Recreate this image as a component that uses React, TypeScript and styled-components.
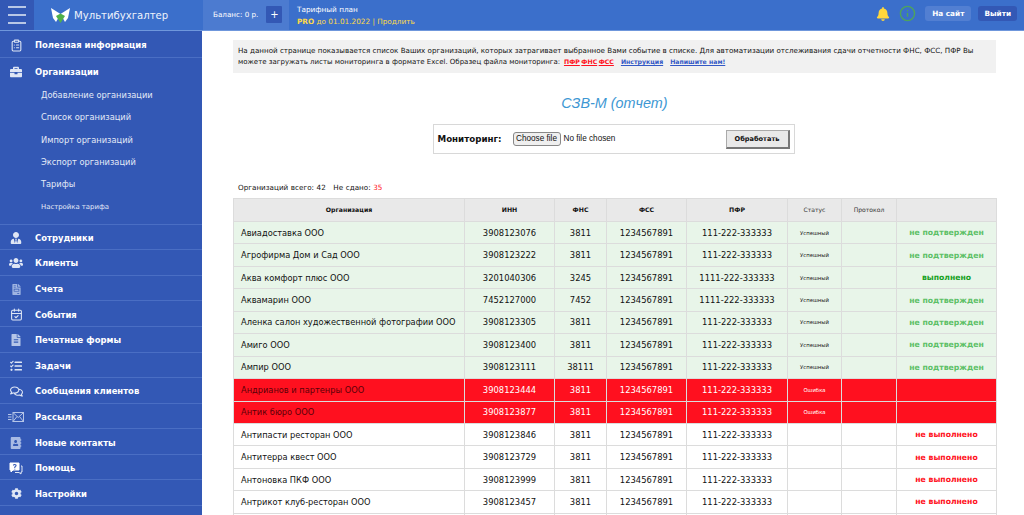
import React from "react";
import styled, { createGlobalStyle } from "styled-components";
import {
  FaAddressBook,
  FaBell,
  FaBriefcase,
  FaCog,
  FaFileAlt,
  FaRegComments,
  FaTasks,
  FaUserTie,
  FaUsers,
  FaFileInvoice,
} from "react-icons/fa";
import { CalendarCheck, ClipboardList, Info } from "lucide-react";

const GlobalStyle = createGlobalStyle`
  html, body {
    margin: 0;
    height: 100%;
    overflow: hidden;
    background: #fff;
    font-family: "DejaVu Sans", Verdana, sans-serif;
    color: #111;
  }
  * { box-sizing: border-box; }
`;

const Page = styled.div`
  width: 1024px;
  height: 515px;
  display: grid;
  grid-template-rows: 31px 1fr;
  overflow: hidden;
`;

const Header = styled.header`
  display: flex;
  align-items: stretch;
  background: #3b6fcb;
  border-bottom: 1px solid #6f97dc;
  color: #fff;
`;

const Burger = styled.div`
  width: 34px;
  background: #3358b5;
  display: flex;
  flex-direction: column;
  align-items: center;
  gap: 6px;
  padding-top: 6px;
  span {
    display: block;
    width: 18px;
    height: 2px;
    background: #b9c7e6;
  }
`;

const Brand = styled.div`
  width: 168px;
  display: flex;
  align-items: center;
  gap: 4px;
  padding-left: 17px;
  font-size: 10.1px;
  color: #eef3fb;
`;

const Balance = styled.div`
  width: 86px;
  margin-left: 1px;
  background: #4c7bd0;
  display: flex;
  align-items: center;
  gap: 8px;
  padding: 0 6px 2px 10px;
  font-size: 7.2px;
  white-space: nowrap;
`;

const PlusButton = styled.span`
  width: 16px;
  height: 17px;
  display: flex;
  align-items: center;
  justify-content: center;
  background: #3358b5;
  font-size: 10px;
  border-radius: 1px;
`;

const Plan = styled.div`
  margin-left: 8px;
  display: flex;
  flex-direction: column;
  gap: 3px;
  padding-top: 5px;
  font-size: 7.3px;
  white-space: nowrap;
`;

const PlanDate = styled.div`
  color: #fbd949;
  b { font-weight: 700; }
`;

const HeaderRight = styled.div`
  margin-left: auto;
  display: flex;
  align-items: center;
  padding: 0 7px 3px 0;
`;

const HeaderIcons = styled.div`
  display: flex;
  align-items: center;
  gap: 9px;
  margin-right: 9px;
`;

const HeaderButton = styled.span<{ $dark?: boolean }>`
  height: 15px;
  display: flex;
  align-items: center;
  padding: 0 ${({ $dark }) => ($dark ? "6px" : "7px")};
  margin-left: ${({ $dark }) => ($dark ? "7px" : "0")};
  border-radius: 3px;
  font-size: 7.3px;
  font-weight: 700;
  background: ${({ $dark }) => ($dark ? "#3358b5" : "#527fd2")};
`;

const Body = styled.div`
  display: grid;
  grid-template-columns: 202px 1fr;
  min-height: 0;
`;

const Sidebar = styled.nav`
  background: #3358b5;
  color: #fff;
  overflow: hidden;
  padding-top: 1px;
`;

const NavRow = styled.div`
  height: 25.6px;
  display: flex;
  align-items: center;
  padding-top: 2px;
  border-bottom: 1px solid #4a6ec4;
  font-size: 8.45px;
  font-weight: 700;
  white-space: nowrap;
`;

const NavIcon = styled.span`
  width: 35px;
  flex: none;
  display: flex;
  justify-content: center;
  padding-right: 3px;
  color: #dfe6f5;
`;

const NavGroup = styled.div`
  border-bottom: 1px solid #4a6ec4;
  padding-bottom: 5.5px;
`;

const GroupTitle = styled(NavRow)`
  height: 26.1px;
  border-bottom: 0;
`;

const SubItem = styled.div<{ $small?: boolean }>`
  height: 22.4px;
  display: flex;
  align-items: center;
  padding-left: 41px;
  color: #e4eaf7;
  font-size: ${({ $small }) => ($small ? "6.9px" : "8.28px")};
  white-space: nowrap;
`;

const Main = styled.main`
  padding: 9px 28px 0 31px;
  min-width: 0;
  overflow: hidden;
`;

const Notice = styled.div`
  height: 33px;
  padding: 5px 5px 0;
  background: #f1f1f1;
  font-size: 7.15px;
  line-height: 11px;
  white-space: nowrap;
`;

const NoticeLine = styled.span`
  font-size: 7px;
`;

const NoticeLink = styled.a<{ $red?: boolean }>`
  font-size: 6.2px;
  font-weight: 700;
  text-decoration: underline;
  color: ${({ $red }) => ($red ? "#ff1020" : "#3358c5")};
  margin-left: ${({ $red }) => ($red ? "1.5px" : "7px")};
`;

const Title = styled.h1`
  margin: 20px 0 0;
  height: 21px;
  text-align: center;
  font: italic 400 14.4px/21px "Liberation Sans", Arial, sans-serif;
  color: #3d97d3;
`;

const MonitorBox = styled.form`
  width: 362px;
  height: 30px;
  margin: 10px auto 0;
  display: flex;
  align-items: center;
  padding: 0 4px;
  border: 1px solid #d8d8d8;
  transform: translateX(-1px);
`;

const MonitorLabel = styled.label`
  width: 75px;
  font-size: 8.7px;
  font-weight: 700;
  white-space: nowrap;
`;

const FileField = styled.div`
  width: 213px;
  display: flex;
  align-items: center;
  gap: 3px;
  padding-bottom: 1px;
  font: 400 8.2px "Liberation Sans", Arial, sans-serif;
`;

const ChooseButton = styled.button`
  width: 48px;
  height: 14px;
  padding: 0;
  font: inherit;
  color: #111;
  background: #efefef;
  border: 1px solid #888;
  border-radius: 3px;
`;

const SubmitButton = styled.button`
  width: 64px;
  height: 19px;
  padding: 0;
  background: #e9e9e9;
  color: #111;
  border: 1px solid #aaa;
  border-right: 2px solid #777;
  border-bottom: 2px solid #777;
  font: 700 6.6px "DejaVu Sans", Verdana, sans-serif;
`;

const Summary = styled.div`
  margin-top: 28px;
  height: 11px;
  padding-left: 5px;
  font-size: 7.2px;
  line-height: 11px;
  word-spacing: 0.3px;
  span { color: #ff1020; }
  i { font-style: normal; margin-left: 5px; }
`;

const Table = styled.table`
  width: 763px;
  margin-top: 5px;
  table-layout: fixed;
  border-collapse: collapse;
`;

const Head = styled.th<{ $thin?: boolean }>`
  height: 23px;
  padding: 0 0 1px;
  background: #e9e9e9;
  border: 1px solid #dcdcdc;
  font-size: ${({ $thin }) => ($thin ? "6.05px" : "6.2px")};
  font-weight: ${({ $thin }) => ($thin ? 400 : 700)};
  color: ${({ $thin }) => ($thin ? "#333" : "#111")};
`;

type Tone = "ok" | "error" | "none";

const Row = styled.tr<{ $tone: Tone }>`
  height: 22.45px;
  background: ${({ $tone }) =>
    $tone === "ok" ? "#e8f5e9" : $tone === "error" ? "#ff101f" : "#fff"};
  color: ${({ $tone }) => ($tone === "error" ? "#fff" : "#111")};
`;

const Cell = styled.td`
  padding: 0;
  border: 1px solid #dcdcdc;
  text-align: center;
  font-size: 8.4px;
  white-space: nowrap;
  overflow: hidden;
`;

const NameCell = styled(Cell)<{ $tone: Tone }>`
  text-align: left;
  padding-left: 7px;
  font-size: 8.25px;
  color: ${({ $tone }) => ($tone === "error" ? "#5a0008" : "#111")};
`;

const StatusCell = styled(Cell)`
  font-size: 5.3px;
`;

const ResultCell = styled(Cell)<{ $color: string }>`
  font-size: 7.7px;
  font-weight: 700;
  color: ${({ $color }) => $color};
`;

const MailIcon = () => (
  <svg width="16" height="12" viewBox="0 0 16 12" fill="none" stroke="#b5c5e8">
    <rect x="5" y="1.5" width="10.5" height="9" />
    <path d="M5 1.5 L10.2 6.5 L15.5 1.5 M5 10.5 L9 5.5 M15.5 10.5 L11.5 5.5" />
    <path d="M0 3.5 H3.5 M0 6 H3.5 M0 8.5 H3.5" />
  </svg>
);

const HelpIcon = () => (
  <svg width="14" height="13" viewBox="0 0 14 13">
    <path d="M1 1 H10 V8 H4 L2 10 V8 H1 Z" fill="#fff" stroke="#fff" />
    <path
      d="M4.2 3.4 Q5.5 1.7 6.9 3 Q7.5 4 5.8 5 V6 M5.8 6.8 V7.6"
      fill="none"
      stroke="#3358b5"
      strokeWidth="1.1"
    />
    <path d="M12 4 H13 V10 H12 V12 L10 10.5 H6" fill="none" stroke="#dfe6f5" />
  </svg>
);

const navTop = [
  { label: "Сотрудники", icon: <FaUserTie size={12} /> },
  { label: "Клиенты", icon: <FaUsers size={14} /> },
  { label: "Счета", icon: <FaFileInvoice size={11} color="#9fb4e2" /> },
  { label: "События", icon: <CalendarCheck size={13} /> },
  { label: "Печатные формы", icon: <FaFileAlt size={12} color="#b5c5e8" /> },
  { label: "Задачи", icon: <FaTasks size={12} /> },
  { label: "Сообщения клиентов", icon: <FaRegComments size={13} /> },
  { label: "Рассылка", icon: <MailIcon /> },
  { label: "Новые контакты", icon: <FaAddressBook size={12} color="#a8bae4" /> },
  { label: "Помощь", icon: <HelpIcon /> },
  { label: "Настройки", icon: <FaCog size={11} /> },
];

const subItems = [
  "Добавление организации",
  "Список организаций",
  "Импорт организаций",
  "Экспорт организаций",
  "Тарифы",
];

const PENDING = "не подтвержден";
const DONE = "выполнено";
const MISSED = "не выполнено";

const rows: [string, string, string, string, string, Tone, string][] = [
  ["Авиадоставка ООО", "3908123076", "3811", "1234567891", "111-222-333333", "ok", PENDING],
  ["Агрофирма Дом и Сад ООО", "3908123222", "3811", "1234567891", "111-222-333333", "ok", PENDING],
  ["Аква комфорт плюс ООО", "3201040306", "3245", "1234567891", "1111-222-333333", "ok", DONE],
  ["Аквамарин ООО", "7452127000", "7452", "1234567891", "1111-222-333333", "ok", PENDING],
  ["Аленка салон художественной фотографии ООО", "3908123305", "3811", "1234567891", "111-222-333333", "ok", PENDING],
  ["Амиго ООО", "3908123400", "3811", "1234567891", "111-222-333333", "ok", PENDING],
  ["Ампир ООО", "3908123111", "38111", "1234567891", "111-222-333333", "ok", PENDING],
  ["Андрианов и партенры ООО", "3908123444", "3811", "1234567891", "111-222-333333", "error", ""],
  ["Антик бюро ООО", "3908123877", "3811", "1234567891", "111-222-333333", "error", ""],
  ["Антипасти ресторан ООО", "3908123846", "3811", "1234567891", "111-222-333333", "none", MISSED],
  ["Антитерра квест ООО", "3908123729", "3811", "1234567891", "111-222-333333", "none", MISSED],
  ["Антоновка ПКФ ООО", "3908123999", "3811", "1234567891", "111-222-333333", "none", MISSED],
  ["Антрикот клуб-ресторан ООО", "3908123457", "3811", "1234567891", "111-222-333333", "none", MISSED],
  ["", "", "", "", "", "none", ""],
];

const resultColor = (text: string) => {
  if (text === PENDING) return "#5cc066";
  if (text === DONE) return "#16a01e";
  return "#ff1020";
};

const statusText = (tone: Tone) => {
  if (tone === "ok") return "Успешный";
  if (tone === "error") return "Ошибка";
  return "";
};

const Logo = () => (
  <svg width="19" height="16" viewBox="0 0 19 16">
    <path d="M0 1 L9.5 7 L5 15 L2 11 Z" fill="#fff" />
    <path d="M19 1 L9.5 7 L14 15 L17 11 Z" fill="#fff" />
    <path d="M5 9 L9.5 6.5 L14 9 L9.5 16 Z" fill="#4fb04a" />
  </svg>
);

export default function App() {
  return (
    <Page>
      <GlobalStyle />
      <Header>
        <Burger>
          <span />
          <span />
          <span />
        </Burger>
        <Brand>
          <Logo />
          Мультибухгалтер
        </Brand>
        <Balance>
          Баланс: 0 р.
          <PlusButton>+</PlusButton>
        </Balance>
        <Plan>
          <div>Тарифный план</div>
          <PlanDate>
            <b>PRO</b> до 01.01.2022 | Продлить
          </PlanDate>
        </Plan>
        <HeaderRight>
          <HeaderIcons>
            <FaBell size={14} color="#ffd83c" />
            <Info size={17} color="#4ea45c" />
          </HeaderIcons>
          <HeaderButton>На сайт</HeaderButton>
          <HeaderButton $dark>Выйти</HeaderButton>
        </HeaderRight>
      </Header>
      <Body>
        <Sidebar>
          <NavRow>
            <NavIcon>
              <ClipboardList size={13} />
            </NavIcon>
            Полезная информация
          </NavRow>
          <NavGroup>
            <GroupTitle>
              <NavIcon>
                <FaBriefcase size={12} />
              </NavIcon>
              Организации
            </GroupTitle>
            {subItems.map((item) => (
              <SubItem key={item}>{item}</SubItem>
            ))}
            <SubItem $small>Настройка тарифа</SubItem>
          </NavGroup>
          {navTop.map((item) => (
            <NavRow key={item.label}>
              <NavIcon>{item.icon}</NavIcon>
              {item.label}
            </NavRow>
          ))}
        </Sidebar>
        <Main>
          <Notice>
            На данной странице показывается список Ваших организаций, которых затрагивает выбранное Вами событие в списке. Для автоматизации отслеживания сдачи отчетности ФНС, ФСС, ПФР Вы
            <br />
            <NoticeLine>можете загружать листы мониторинга в формате Excel. Образец файла мониторинга:</NoticeLine>{" "}
            <NoticeLink $red>ПФР</NoticeLink>
            <NoticeLink $red>ФНС</NoticeLink>
            <NoticeLink $red>ФСС</NoticeLink>
            <NoticeLink>Инструкция</NoticeLink>
            <NoticeLink>Напишите нам!</NoticeLink>
          </Notice>
          <Title>СЗВ-М (отчет)</Title>
          <MonitorBox>
            <MonitorLabel>Мониторинг:</MonitorLabel>
            <FileField>
              <ChooseButton type="button">Choose file</ChooseButton>
              No file chosen
            </FileField>
            <SubmitButton type="button">Обработать</SubmitButton>
          </MonitorBox>
          <Summary>
            Организаций всего: 42 <i>Не сдано:</i> <span>35</span>
          </Summary>
          <Table>
            <colgroup>
              <col style={{ width: 231 }} />
              <col style={{ width: 90 }} />
              <col style={{ width: 52 }} />
              <col style={{ width: 80 }} />
              <col style={{ width: 101 }} />
              <col style={{ width: 54 }} />
              <col style={{ width: 55 }} />
              <col style={{ width: 100 }} />
            </colgroup>
            <thead>
              <tr>
                <Head>Организация</Head>
                <Head>ИНН</Head>
                <Head>ФНС</Head>
                <Head>ФСС</Head>
                <Head>ПФР</Head>
                <Head $thin>Статус</Head>
                <Head $thin>Протокол</Head>
                <Head />
              </tr>
            </thead>
            <tbody>
              {rows.map(([name, inn, fns, fss, pfr, tone, result], index) => (
                <Row key={index} $tone={tone}>
                  <NameCell $tone={tone}>{name}</NameCell>
                  <Cell>{inn}</Cell>
                  <Cell>{fns}</Cell>
                  <Cell>{fss}</Cell>
                  <Cell>{pfr}</Cell>
                  <StatusCell>{statusText(tone)}</StatusCell>
                  <Cell />
                  <ResultCell $color={resultColor(result)}>{result}</ResultCell>
                </Row>
              ))}
            </tbody>
          </Table>
        </Main>
      </Body>
    </Page>
  );
}
